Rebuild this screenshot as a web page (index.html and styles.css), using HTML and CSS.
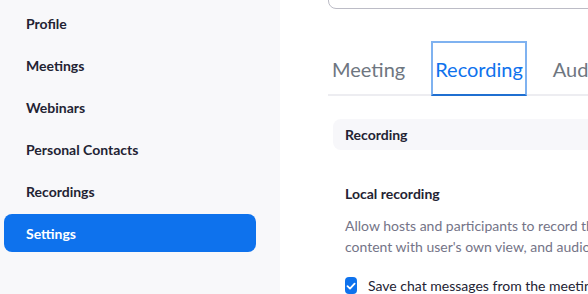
FILE: index.html
```html
<!DOCTYPE html>
<html lang="en">
<head>
    <meta charset="UTF-8">
    <meta name="viewport" content="width=device-width, initial-scale=1.0">
    <title>Settings</title>
    <link rel="stylesheet" href="styles.css">
</head>
<body>
    <div class="page">
        <nav class="sidebar">
            <a class="nav-item">Profile</a>
            <a class="nav-item">Meetings</a>
            <a class="nav-item">Webinars</a>
            <a class="nav-item">Personal Contacts</a>
            <a class="nav-item">Recordings</a>
            <a class="nav-item active">Settings</a>
        </nav>

        <main class="main">
            <div class="search-box"></div>

            <div class="tabs">
                <span class="tab">Meeting</span>
                <span class="tab selected">Recording</span>
                <span class="tab">Audio Conferencing</span>
            </div>

            <div class="section-title">Recording</div>

            <div class="setting">
                <div class="setting-name">Local recording</div>
                <p class="setting-desc">Allow hosts and participants to record the meeting to a local file<br>content with user's own view, and audio files for each participant</p>
                <label class="check-row">
                    <span class="checkbox">
                        <svg width="12" height="12" viewBox="0 0 12 12"><path d="M2.5 6.2 L5 8.6 L9.6 3.6" fill="none" stroke="#fff" stroke-width="1.8" stroke-linecap="round" stroke-linejoin="round"/></svg>
                    </span>
                    Save chat messages from the meeting / webinar
                </label>
            </div>
        </main>
    </div>
</body>
</html>
```

FILE: styles.css
```css
body {
    margin: 0;
    font-family: Lato, "Open Sans", sans-serif;
    color: #232333;
    background: #ffffff;
    overflow: hidden;
}
.page {
    display: flex;
    height: 294px;
}
.sidebar {
    width: 272px;
    flex: none;
    background: #f8f8fa;
    padding: 4px 4px 0 4px;
    display: flex;
    flex-direction: column;
}
.nav-item {
    display: flex;
    align-items: center;
    height: 38px;
    margin-bottom: 4px;
    padding-left: 22px;
    width: 230px;
    font-size: 14px;
    font-weight: 700;
    color: #232333;
    border-radius: 8px;
}
.nav-item.active {
    background: #0e72ed;
    color: #ffffff;
}
.main {
    flex: 1;
    min-width: 0;
    padding-left: 48px;
    overflow: hidden;
}
.search-box {
    height: 36px;
    margin-top: -29px;
    width: 400px;
    border: 1px solid #bcbcc6;
    border-radius: 8px;
}
.tabs {
    display: flex;
    margin-top: 32px;
    border-bottom: 2px solid #ededf1;
    white-space: nowrap;
}
.tab {
    display: flex;
    align-items: center;
    height: 51px;
    padding: 0 2px;
    margin-right: 22px;
    font-size: 20px;
    color: #6e7680;
    border: 2px solid transparent;
    margin-bottom: -2px;
}
.tab.selected {
    color: #0e72ed;
    border-color: #7fb2f0;
    border-bottom-color: #1f6fd1;
}
.section-title {
    margin: 23px 0 0 5px;
    height: 31px;
    width: 400px;
    display: flex;
    align-items: center;
    padding-left: 12px;
    background: #f7f7fa;
    border-radius: 8px;
    font-size: 14px;
    font-weight: 700;
}
.setting {
    padding-left: 17px;
    padding-top: 34px;
    white-space: nowrap;
}
.setting-name {
    font-size: 14px;
    font-weight: 700;
    line-height: 20px;
}
.setting-desc {
    margin: 11px 0 0 0;
    font-size: 14px;
    line-height: 21px;
    color: #747487;
}
.check-row {
    display: flex;
    align-items: center;
    margin-top: 20px;
    font-size: 14px;
    color: #232333;
}
.checkbox {
    width: 17px;
    height: 17px;
    border-radius: 4px;
    background: #0e72ed;
    display: flex;
    align-items: center;
    justify-content: center;
    margin-right: 11px;
}
```
